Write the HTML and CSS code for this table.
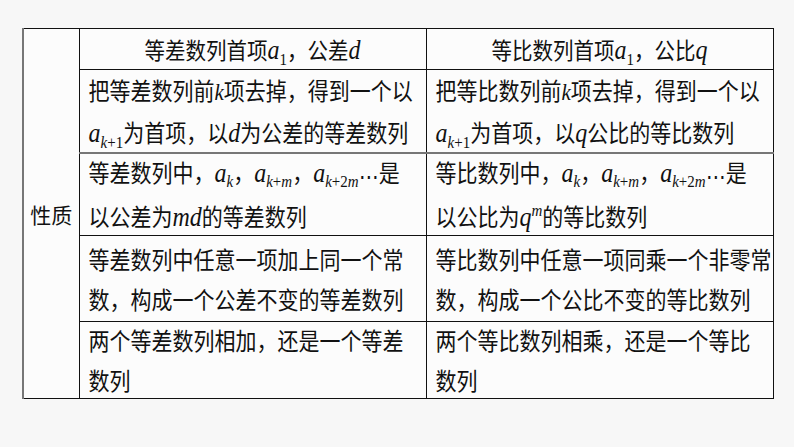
FILE: index.html
```html
<!DOCTYPE html>
<html lang="zh">
<head>
<meta charset="utf-8">
<link rel="stylesheet" href="styles.css">
</head>
<body>
<table class="props">
  <colgroup><col class="c0"><col class="c1"><col class="c2"></colgroup>
  <tr class="head">
    <td class="label" rowspan="5">性质</td>
    <td class="h"><div class="t">等差数列首项<i class="m">a</i><sub>1</sub>，公差<i class="m">d</i></div></td>
    <td class="h"><div class="t">等比数列首项<i class="m">a</i><sub>1</sub>，公比<i class="m">q</i></div></td>
  </tr>
  <tr class="r1">
    <td><div class="t">把等差数列前<i class="m k">k</i>项去掉，得到一个以<br><i class="m">a</i><sub><i>k</i>+1</sub>为首项，以<i class="m">d</i>为公差的等差数列</div></td>
    <td><div class="t">把等比数列前<i class="m k">k</i>项去掉，得到一个以<br><i class="m">a</i><sub><i>k</i>+1</sub>为首项，以<i class="m">q</i>公比的等比数列</div></td>
  </tr>
  <tr class="r2">
    <td><div class="t">等差数列中，<i class="m">a</i><sub><i>k</i></sub>，<i class="m">a</i><sub><i>k</i>+<i>m</i></sub>，<i class="m">a</i><sub><i>k</i>+2<i>m</i></sub><span class="dots">⋯</span>是<br>以公差为<i class="m">md</i>的等差数列</div></td>
    <td><div class="t">等比数列中，<i class="m">a</i><sub><i>k</i></sub>，<i class="m">a</i><sub><i>k</i>+<i>m</i></sub>，<i class="m">a</i><sub><i>k</i>+2<i>m</i></sub><span class="dots">⋯</span>是<br>以公比为<i class="m">q</i><sup><i>m</i></sup>的等比数列</div></td>
  </tr>
  <tr class="r3">
    <td><div class="t">等差数列中任意一项加上同一个常<br>数，构成一个公差不变的等差数列</div></td>
    <td><div class="t">等比数列中任意一项同乘一个非零常<br>数，构成一个公比不变的等比数列</div></td>
  </tr>
  <tr class="r4">
    <td><div class="t">两个等差数列相加，还是一个等差<br>数列</div></td>
    <td><div class="t">两个等比数列相乘，还是一个等比<br>数列</div></td>
  </tr>
</table>
</body>
</html>
```
FILE: styles.css
```css
html, body {
  margin: 0;
  padding: 0;
  background: #f7f7f7;
}
body {
  padding: 28px 0 0 22px;
  font-family: "Noto Sans CJK SC", "Noto Sans", sans-serif;
  color: #111;
}
.props {
  border-collapse: collapse;
  table-layout: fixed;
  width: 750px;
  background: #fcfcfc;
}
.c0 { width: 56px; }
.c1 { width: 347px; }
.c2 { width: 347px; }
.props td {
  border: 1.5px solid #111;
  padding: 0 0 0 9px;
  font-size: 21px;
  line-height: 36px;
  vertical-align: middle;
  white-space: nowrap;
  overflow: visible;
}
.props td.label {
  border-left: 2px solid #777;
  padding: 0;
  text-align: center;
  font-size: 21px;
}
.head td.h {
  height: 40px;
  text-align: center;
  padding: 0;
  font-size: 20.5px;
}
.r1 td { height: 82px; border-bottom: 2.5px solid #777; }
.r2 td { height: 81px; }
.r3 td { height: 85px; }
.r4 td { height: 76px; }
.t {
  transform: scaleY(1.12);
  transform-origin: center;
}
.m {
  font-family: "Liberation Serif", "Times New Roman", "DejaVu Serif", serif;
  font-style: italic;
  font-size: 24px;
}
.m.k { font-size: 21px; }
sub, sup {
  font-family: "Liberation Serif", "Times New Roman", "DejaVu Serif", serif;
  font-size: 15px;
  line-height: 0;
}
sub { vertical-align: -5px; }
sup { vertical-align: 9px; }
sub i, sup i { font-family: "Liberation Serif", "Times New Roman", serif; font-style: italic; }
.dots {
  font-family: "Liberation Serif", "Times New Roman", serif;
  font-size: 20px;
  vertical-align: -2px;
}
```
